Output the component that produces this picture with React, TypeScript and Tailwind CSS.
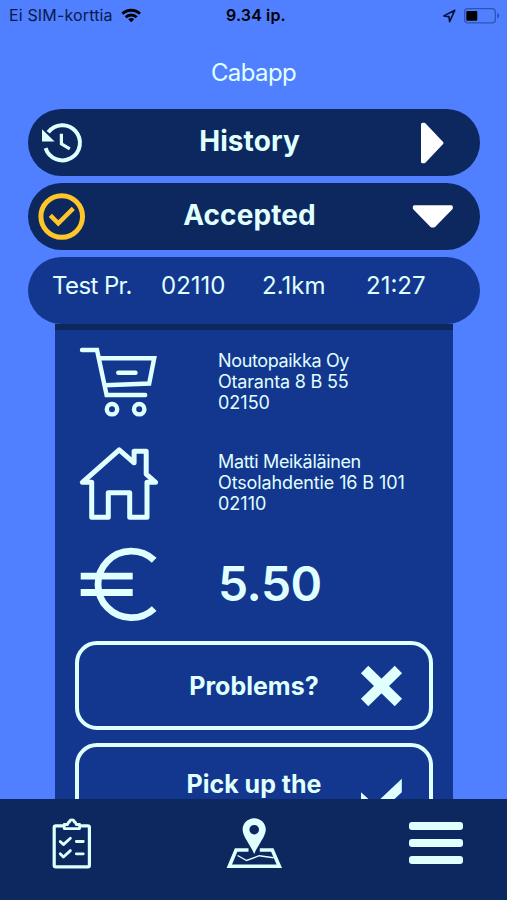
import type { ReactNode } from "react";

const details = [
  { text: "Test Pr.", className: "w-[109px] tracking-[-0.6px]" },
  { text: "02110", className: "w-[101px]" },
  { text: "2.1km", className: "w-[104px]" },
  { text: "21:27", className: "w-[70px]" },
];

function StatusBar() {
  return (
    <div className="flex h-[30px] shrink-0 items-center pl-[9px] pr-[7px] text-[#081a4d]">
      <div className="flex w-[217px] items-center">
        <span className="w-28 whitespace-nowrap text-[16px] leading-5 tracking-[0.15px]">Ei SIM-korttia</span>
        <svg viewBox="121 7 21 15" className="h-[15px] w-[21px] text-black" fill="none" stroke="currentColor" strokeWidth="2.9">
          <path d="M122.4 12.8a12.6 12.6 0 0 1 17.6 0" />
          <path d="M125.7 16.3a7.8 7.8 0 0 1 11 0" />
          <path d="M131.2 21.2l-3-3a4.2 4.2 0 0 1 6 0z" fill="currentColor" stroke="none" />
        </svg>
      </div>
      <span className="whitespace-nowrap text-[16px] font-semibold leading-5 tracking-[0.15px] text-black">9.34 ip.</span>
      <svg viewBox="442 5 58 19" className="ml-auto h-[19px] w-[58px]" fill="none">
        <path d="M454.8 9.3l-11 5.6 5.2.7.6 5z" stroke="#06133c" strokeWidth="1.6" strokeLinejoin="round" />
        <rect x="464.6" y="7.6" width="30.8" height="14.2" rx="3.4" stroke="#2f52b4" strokeWidth="1.3" />
        <rect x="466.3" y="10" width="11" height="9.7" rx="1" fill="#000" />
        <path d="M497.2 12v5.4c2.8-.9 2.8-4.5 0-5.4z" fill="#2f52b4" />
      </svg>
    </div>
  );
}

function HistoryIcon() {
  return (
    <svg viewBox="38 119 48 48" className="h-12 w-12" fill="none" stroke="#e0ffff">
      <path d="M45.6 148.2A17.6 17.6 0 1 0 48.2 132.3" strokeWidth="4" />
      <path d="M42 129.2v12.2h12.6z" fill="#e0ffff" stroke="none" />
      <path d="M61.4 133.8v10l8.4 5" strokeWidth="3.2" />
    </svg>
  );
}

function AcceptedIcon() {
  return (
    <svg viewBox="38 193 48 48" className="h-12 w-12" fill="none" stroke="#ffc629">
      <circle cx="61.7" cy="216.5" r="20.8" strokeWidth="5" />
      <path d="M50.3 215.4l8 8 15-15" strokeWidth="4.4" />
    </svg>
  );
}

function CartIcon() {
  return (
    <svg viewBox="80 345 80 75" className="h-[75px] w-20" fill="none" stroke="#e0ffff" strokeWidth="4.4">
      <path d="M83 350H98l9.6 45h38.6" strokeLinecap="round" />
      <path d="M100 358.2h55.2l-5 25.3-44.4 1.8" />
      <path d="M119.3 372.7h17.2" strokeLinecap="round" />
      <circle cx="113" cy="409.2" r="5.2" />
      <circle cx="140.2" cy="409.2" r="5.2" />
    </svg>
  );
}

function HouseIcon() {
  return (
    <svg viewBox="79 445 80 77" className="h-[77px] w-20" fill="none" stroke="#e0ffff" strokeWidth="5" strokeLinejoin="round">
      <path d="M119.2 449.8L82.4 482.3h9.3v35h16.6v-24.6h21.4v24.6H147v-35h8.6l-9.4-8.2V451.2h-12.1v11.6z" />
    </svg>
  );
}

function EuroIcon() {
  return (
    <svg viewBox="79 546 80 77" className="h-[77px] w-20" fill="none" stroke="#e0ffff" strokeWidth="6.8">
      <path d="M154.2 560.2a33.3 33.3 0 1 0 0 48.4" />
      <path d="M80.7 576.2h52M80.7 592.5h52" />
    </svg>
  );
}

function ClipboardIcon() {
  return (
    <svg viewBox="51 817 42 53" className="h-[53px] w-[42px]" fill="none" stroke="#e0ffff" strokeWidth="3.2" strokeLinejoin="round" strokeLinecap="round">
      <path d="M63 825.8h-7.2q-1.6 0-1.6 1.6v37.8q0 1.6 1.6 1.6h32q1.6 0 1.6-1.6v-37.8q0-1.6-1.6-1.6H81" />
      <path d="M64.2 828.6v-4.1h3.4c.4-2 .6-2.3 1.9-2.5.2-2.8 4.6-2.8 4.8 0 1.3.2 1.5.5 1.9 2.5h3.4v4.1z" strokeWidth="2.8" />
      <path d="M60.2 841.4l3.2 3.2 7-6.4M60.2 853.8l3.2 3.2 7-6.4M76.3 841.5h7M76.3 853.8h7" strokeWidth="2.8" />
    </svg>
  );
}

function MapIcon() {
  return (
    <svg viewBox="225 816 59 54" className="h-[54px] w-[59px]" fill="none" stroke="#e0ffff">
      <path d="M248.5 850h-12.4l-6.8 16.2h50l-7-16.2h-12.5" strokeWidth="3.6" />
      <path d="M237.6 855.5l9 5 12.6-4.8 14.4 2" strokeWidth="1.4" />
      <path
        d="M254.2 818.2c-6.5 0-11.6 5-11.6 11.4 0 6.8 7.4 14.6 11.6 24.4 4.2-9.8 11.6-17.6 11.6-24.4 0-6.4-5.1-11.4-11.6-11.4zm0 6.7a4.8 4.8 0 1 1 0 9.6 4.8 4.8 0 0 1 0-9.6z"
        fill="#e0ffff"
        stroke="none"
      />
    </svg>
  );
}

function Bar({ icon, title, arrow }: { icon: ReactNode; title: string; arrow: string }) {
  return (
    <div className="flex h-[67px] shrink-0 items-center rounded-full bg-[#0d275f] pl-[10px] pr-[21px]">
      {icon}
      <span className="flex-1 pb-[3px] pl-[6px] text-center text-[28px] font-bold leading-8 tracking-[0.1px]">{title}</span>
      <svg viewBox="0 0 52 48" className="h-12 w-[52px]" fill="#fff" stroke="#fff" strokeWidth="3" strokeLinejoin="round">
        <path d={arrow} />
      </svg>
    </div>
  );
}

function Row({ icon, children }: { icon: ReactNode; children: ReactNode }) {
  return (
    <div className="flex h-[101px] items-center pl-6">
      {icon}
      <div className="pb-[2px] pl-[59px]">{children}</div>
    </div>
  );
}

export default function App() {
  return (
    <div className="flex h-[900px] w-[507px] flex-col overflow-hidden bg-[#5080ff] font-['Inter',sans-serif] text-[#e0ffff]">
      <StatusBar />
      <h1 className="flex h-[79px] shrink-0 items-center justify-center pt-[6px] text-[24px] leading-8 tracking-[-0.6px]">Cabapp</h1>

      <main className="flex min-h-0 flex-1 flex-col gap-[7px] overflow-hidden pl-7 pr-[27px]">
        <Bar icon={<HistoryIcon />} title="History" arrow="M15.5 5.2h1.8L35 24 17.3 42.8h-1.8z" />
        <Bar icon={<AcceptedIcon />} title="Accepted" arrow="M7.3 13.8h37v1.5L27 33h-2.4L7.3 15.3z" />

        <div>
          <div className="flex h-[67px] rounded-full bg-[#13378f] pl-6 pt-[13px] text-[24px] leading-8">
            {details.map((d) => (
              <span key={d.text} className={`whitespace-nowrap ${d.className}`}>
                {d.text}
              </span>
            ))}
          </div>

          <section className="ml-[27px] w-[398px] border-t-[6px] border-[#0d275f] bg-[#13378f] pt-[2px]">
            <Row icon={<CartIcon />}>
              <p className="text-[18px] leading-[21px] tracking-[-0.35px]">
                Noutopaikka Oy
                <br />
                <span className="tracking-[-0.2px]">Otaranta 8 B 55</span>
                <br />
                <span className="tracking-normal">02150</span>
              </p>
            </Row>
            <Row icon={<HouseIcon />}>
              <p className="text-[18px] leading-[21px] tracking-[-0.35px]">
                Matti Meikäläinen
                <br />
                <span className="tracking-[-0.12px]">Otsolahdentie 16 B 101</span>
                <br />
                <span className="tracking-normal">02110</span>
              </p>
            </Row>
            <Row icon={<EuroIcon />}>
              <p className="text-[48px] font-semibold leading-[50px] tracking-[-0.5px]">5.50</p>
            </Row>

            <div className="flex flex-col gap-[13px] px-5 pt-[6px]">
              <button className="flex h-[89px] items-center rounded-[22px] border-4 border-[#e0ffff]">
                <span className="w-[281px] pl-[69px] text-center text-[25px] font-bold leading-[30px]">Problems?</span>
                <svg viewBox="360 665 43 42" className="h-[42px] w-[43px]" stroke="#e0ffff" strokeWidth="10.5" strokeLinejoin="round">
                  <path d="M364.6 669.4l33.8 33M398.4 669.4l-33.8 33" />
                </svg>
              </button>
              <button className="flex h-[89px] items-start rounded-[22px] border-4 border-[#e0ffff] pt-[22px]">
                <span className="w-[281px] pl-[69px] text-center text-[25px] font-bold leading-[30px]">Pick up the</span>
                <svg viewBox="360 775 43 46" className="mt-[6px] h-[46px] w-[43px]" fill="#e0ffff">
                  <path d="M361 792.3l13.5 12.2 27.3-25.7v13.4l-26.8 25-14-12z" />
                </svg>
              </button>
            </div>
          </section>
        </div>
      </main>

      <nav className="flex h-[101px] shrink-0 items-start justify-between bg-[#0d275f] pl-[51px] pr-11">
        <div className="pt-[18px]">
          <ClipboardIcon />
        </div>
        <div className="pl-[6px] pt-[17px]">
          <MapIcon />
        </div>
        <div className="flex w-[54px] flex-col gap-[9px] pt-[23px]">
          <span className="h-2 rounded-[3px] bg-[#e0ffff]" />
          <span className="h-2 rounded-[3px] bg-[#e0ffff]" />
          <span className="h-2 rounded-[3px] bg-[#e0ffff]" />
        </div>
      </nav>
    </div>
  );
}
